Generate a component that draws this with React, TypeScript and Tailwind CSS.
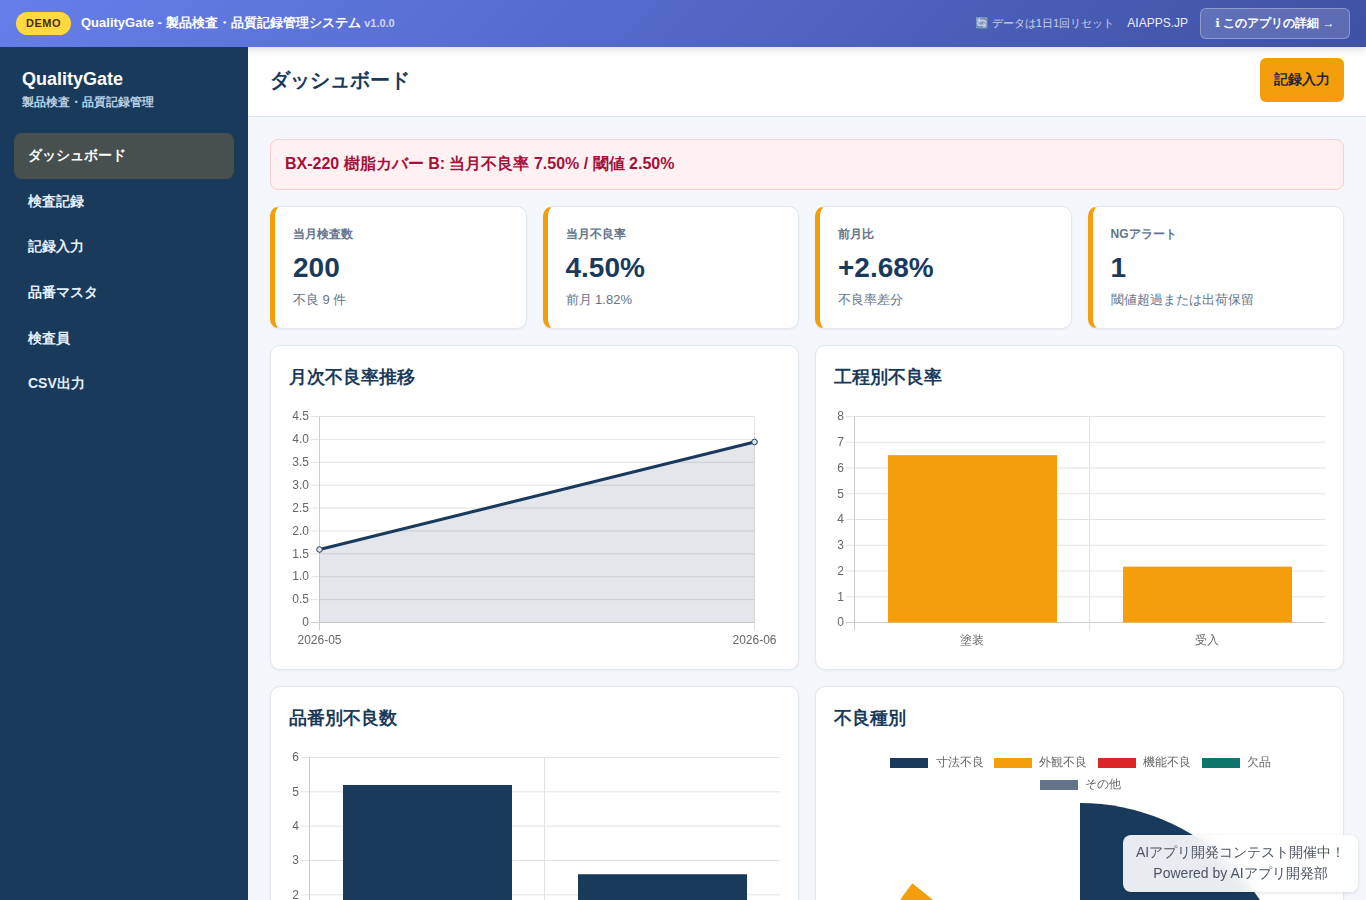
import React from 'react';

const navItems = ['ダッシュボード', '検査記録', '記録入力', '品番マスタ', '検査員', 'CSV出力'];

const kpis = [
  { label: '当月検査数', value: '200', sub: '不良 9 件' },
  { label: '当月不良率', value: '4.50%', sub: '前月 1.82%' },
  { label: '前月比', value: '+2.68%', sub: '不良率差分' },
  { label: 'NGアラート', value: '1', sub: '閾値超過または出荷保留' },
];

const GRID = '#e3e3e3';
const AXIS = '#cccccc';
const LABEL = '#666666';

const ChartCard: React.FC<{ title: string; children: React.ReactNode }> = ({ title, children }) => (
  <div className="bg-white border border-[#e2e8f0] rounded-[10px] shadow-[0_1px_3px_rgba(0,0,0,0.05)] p-[18px]">
    <h3 className="text-[18px] leading-[26px] font-bold text-[#1a3a5c] mb-[14px]">{title}</h3>
    {children}
  </div>
);

const LineChart: React.FC = () => {
  const top = 12.5;
  const bottom = 218.5;
  const ticks = ['4.5', '4.0', '3.5', '3.0', '2.5', '2.0', '1.5', '1.0', '0.5', '0'];
  const step = (bottom - top) / 9;
  return (
    <svg width="491" height="247" className="block will-change-transform">
      {ticks.map((t, i) => (
        <g key={t}>
          <line x1="22" x2="465.5" y1={top + step * i} y2={top + step * i} stroke={i === 9 ? AXIS : GRID} />
          <text x="20" y={top + step * i + 3.75} textAnchor="end" fontSize="12" fill={LABEL}>{t}</text>
        </g>
      ))}
      <line x1="30.5" x2="30.5" y1={top} y2="226.5" stroke={AXIS} />
      <line x1="465.5" x2="465.5" y1={top} y2="226.5" stroke={GRID} />
      <path d="M30.5 145.5L465.5 38V218.5H30.5Z" fill="#1a3a5c" fillOpacity="0.12" />
      <line x1="30.5" y1="145.5" x2="465.5" y2="38" stroke="#1a3a5c" strokeWidth="3" />
      <circle cx="30.5" cy="145.5" r="2.8" fill="#dfe4ea" stroke="#1a3a5c" strokeWidth="1" />
      <circle cx="465.5" cy="38" r="2.8" fill="#dfe4ea" stroke="#1a3a5c" strokeWidth="1" />
      <text x="30.5" y="240" textAnchor="middle" fontSize="12" fill={LABEL}>2026-05</text>
      <text x="465.5" y="240" textAnchor="middle" fontSize="12" fill={LABEL}>2026-06</text>
    </svg>
  );
};

const BarChart: React.FC<{
  max: number;
  color: string;
  bars: { x: number; value: number; label?: string }[];
}> = ({ max, color, bars }) => {
  const top = 12.5;
  const bottom = 218.5;
  const step = (bottom - top) / max;
  const ticks = Array.from({ length: max + 1 }, (_, i) => max - i);
  return (
    <svg width="491" height="247" className="block will-change-transform">
      {ticks.map((t, i) => (
        <g key={t}>
          <line x1="12" x2="491" y1={top + step * i} y2={top + step * i} stroke={t === 0 ? AXIS : GRID} />
          <text x="10" y={top + step * i + 3.75} textAnchor="end" fontSize="12" fill={LABEL}>{t}</text>
        </g>
      ))}
      <line x1="20.5" x2="20.5" y1={top} y2="226.5" stroke={AXIS} />
      <line x1="255.5" x2="255.5" y1={top} y2="226.5" stroke={GRID} />
      {bars.map((b) => (
        <g key={b.x}>
          <rect x={b.x} y={bottom - step * b.value} width="169" height={step * b.value} fill={color} />
          {b.label && (
            <text x={b.x + 84} y="240" textAnchor="middle" fontSize="12" fill={LABEL}>{b.label}</text>
          )}
        </g>
      ))}
    </svg>
  );
};

const legend = [
  { x: 56, y: 13, textX: 102, color: '#1a3a5c', label: '寸法不良' },
  { x: 160, y: 13, textX: 205, color: '#f59e0b', label: '外観不良' },
  { x: 264, y: 13, textX: 309, color: '#dc2626', label: '機能不良' },
  { x: 368, y: 13, textX: 413, color: '#0f766e', label: '欠品' },
  { x: 206, y: 35, textX: 251, color: '#64748b', label: 'その他' },
];

const PieChart: React.FC = () => (
  <svg width="491" height="500" className="block will-change-transform">
    {legend.map((l) => (
      <g key={l.label}>
        <rect x={l.x} y={l.y} width="38" height="10" fill={l.color} />
        <text x={l.textX} y={l.y + 8} fontSize="12" fill={LABEL}>{l.label}</text>
      </g>
    ))}
    {/* center (246, 273.5), r 215.5 */}
    <path d="M246 273.5V58A215.5 215.5 0 0 1 246 489Z" fill="#1a3a5c" />
    <path d="M246 273.5V489A215.5 215.5 0 0 1 78.3 138.2Z" fill="#f59e0b" />
  </svg>
);

export default function App() {
  return (
    <div className="h-screen flex flex-col overflow-hidden bg-[#f4f7fb] font-[family-name:'Liberation_Sans',sans-serif]">
      <header className="relative z-10 h-[47px] shrink-0 flex items-center justify-between px-4 bg-[linear-gradient(135deg,#667eea,#3f51a3)] shadow-[0_2px_8px_rgba(0,0,0,0.15)] text-white">
        <div className="flex items-center gap-[10px]">
          <span className="bg-[#ffd93d] text-[#4a2c00] text-[11px] font-bold tracking-[0.5px] px-[10px] h-[23px] leading-[23px] rounded-full">DEMO</span>
          <span className="text-[13px] font-bold mb-[2px]">
            QualityGate - 製品検査・品質記録管理システム <span className="text-[11px] opacity-70">v1.0.0</span>
          </span>
        </div>
        <div className="flex items-center">
          <span className="text-[11.2px] opacity-70 mb-[1px]">🔄 データは1日1回リセット</span>
          <span className="text-[12px] opacity-90 ml-[13px] mb-[2px]">AIAPPS.JP</span>
          <span className="ml-[12px] h-[31px] w-[150px] pb-[2px] flex items-center justify-center text-[12px] font-bold rounded-[6px] border border-white/30 bg-white/15">
            <span className="font-[family-name:'DejaVu_Sans',sans-serif] mr-[3px]">{'\u2139'}</span>このアプリの詳細 →
          </span>
        </div>
      </header>
      <div className="flex flex-1 min-h-0">
        <aside className="relative z-20 w-[248px] shrink-0 bg-[#1a3a5c] px-[14px]">
          <div className="px-2 pt-[20px] mb-[22px]">
            <div className="text-[18px] leading-[24px] font-bold text-white">QualityGate</div>
            <div className="text-[12px] leading-[18px] font-bold text-[#b8cfe4] mt-[2px]">製品検査・品質記録管理</div>
          </div>
          <nav className="flex flex-col">
            {navItems.map((item, i) => (
              <a
                key={item}
                className={`h-[45.6px] flex items-center px-[14px] rounded-[8px] text-[14px] font-bold ${i === 0 ? 'bg-[#47504f] text-white' : 'text-[#e6f0fa]'}`}
              >
                {item}
              </a>
            ))}
          </nav>
        </aside>
        <main className="flex-1 min-w-0 overflow-hidden">
          <div className="h-[70px] bg-white border-b border-[#dde5ef] flex items-center justify-between px-[22px]">
            <h1 className="text-[20px] font-bold text-[#1a3a5c] mb-[4px]">ダッシュボード</h1>
            <button className="h-[44px] w-[84px] mb-[3px] pb-[2px] bg-[#f59e0b] rounded-[6px] text-[14px] font-bold text-[#1f2937]">記録入力</button>
          </div>
          <div className="p-[22px] flex flex-col gap-4">
            <div className="h-[51px] flex items-center px-[14px] pb-[2px] bg-[#fff0f1] border border-[#fecdd3] rounded-[8px] text-[16px] font-bold text-[#a5103b]">
              BX-220 樹脂カバー B: 当月不良率 7.50% / 閾値 2.50%
            </div>
            <div className="grid grid-cols-4 gap-4">
              {kpis.map((k) => (
                <div key={k.label} className="h-[123px] bg-white border border-[#e2e8f0] border-l-[5px] border-l-[#f59e0b] rounded-[10px] shadow-[0_1px_3px_rgba(0,0,0,0.05)] pl-[18px] pt-[18px]">
                  <div className="text-[12px] leading-[18px] font-bold text-[#64748b]">{k.label}</div>
                  <div className="text-[28px] leading-[34px] font-bold text-[#1a3a5c] mt-[8px]">{k.value}</div>
                  <div className="text-[13px] leading-[18px] text-[#64748b] mt-[6px]">{k.sub}</div>
                </div>
              ))}
            </div>
            <div className="grid grid-cols-2 gap-4">
              <ChartCard title="月次不良率推移">
                <LineChart />
              </ChartCard>
              <ChartCard title="工程別不良率">
                <BarChart max={8} color="#f59e0b" bars={[{ x: 54, value: 6.5, label: '塗装' }, { x: 289, value: 2.17, label: '受入' }]} />
              </ChartCard>
              <ChartCard title="品番別不良数">
                <BarChart max={6} color="#1a3a5c" bars={[{ x: 54, value: 5.2 }, { x: 289, value: 2.6 }]} />
              </ChartCard>
              <ChartCard title="不良種別">
                <PieChart />
              </ChartCard>
            </div>
          </div>
        </main>
      </div>
      <div className="fixed right-2 bottom-2 z-30 w-[235px] h-[57px] pb-[2px] flex flex-col items-center justify-center rounded-[8px] bg-white/90 backdrop-blur-sm shadow-[0_1px_4px_rgba(0,0,0,0.12)] text-[14px] leading-[21px] text-[#4b5563]">
        <div>AIアプリ開発コンテスト開催中！</div>
        <div>Powered by AIアプリ開発部</div>
      </div>
    </div>
  );
}
